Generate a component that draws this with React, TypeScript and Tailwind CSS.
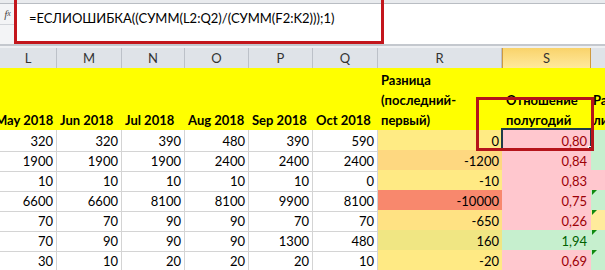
import React from "react";

type Row = {
  nums: number[];
  diff: string;
  diffBg: string;
  ratio: string;
  good: boolean;
  tBg: string;
  flag: boolean;
};

const ROWS: Row[] = [
  { nums: [320, 320, 390, 480, 390, 590], diff: "0", diffBg: "bg-[#ffeb84]", ratio: "0,80", good: false, tBg: "bg-[#c6efce]", flag: false },
  { nums: [1900, 1900, 1900, 2400, 2400, 2400], diff: "-1200", diffBg: "bg-[#fed880]", ratio: "0,84", good: false, tBg: "bg-[#c6efce]", flag: false },
  { nums: [10, 10, 10, 10, 10, 0], diff: "-10", diffBg: "bg-[#ffea84]", ratio: "0,83", good: false, tBg: "bg-[#ffc7ce]", flag: false },
  { nums: [6600, 6600, 8100, 8100, 9900, 8100], diff: "-10000", diffBg: "bg-[#f8886d]", ratio: "0,75", good: false, tBg: "bg-[#c6efce]", flag: true },
  { nums: [70, 70, 90, 90, 70, 70], diff: "-650", diffBg: "bg-[#ffe283]", ratio: "0,26", good: false, tBg: "bg-[#ffeb9c]", flag: true },
  { nums: [70, 90, 90, 90, 1300, 480], diff: "160", diffBg: "bg-[#f0e683]", ratio: "1,94", good: true, tBg: "bg-[#c6efce]", flag: true },
  { nums: [30, 10, 20, 20, 20, 10], diff: "-20", diffBg: "bg-[#ffea84]", ratio: "0,69", good: false, tBg: "bg-[#c6efce]", flag: true },
];

const LETTERS = ["L", "M", "N", "O", "P", "Q", "R"];
const MONTHS = ["May 2018", "Jun 2018", "Jul 2018", "Aug 2018", "Sep 2018", "Oct 2018"];

export default function App() {
  return (
    <div className="relative h-[270px] w-[605px] overflow-hidden bg-white font-['Lato',sans-serif] text-[13px] text-black">
      {/* formula bar */}
      <div className="h-[3px] bg-[#e9ebee]" />
      <div className="flex h-[41px] border-t border-[#b9bdc3]">
        <div className="flex w-[15px] flex-col bg-[#f3f4f6]">
          <div className="flex h-[21px] items-center justify-center border-b border-[#d2d5da] font-['Liberation_Serif',serif] text-[11px] italic text-[#4a4a4a]">
            f<span className="text-[8px]">x</span>
          </div>
        </div>
        <div className="flex-1 pl-[14px] pt-[4px] leading-[20px]">
          =ЕСЛИОШИБКА((СУММ(L2:Q2)/(СУММ(F2:K2)));1)
        </div>
      </div>
      <div className="h-[4px] border-t-2 border-[#c4c8ce] bg-[#eef0f3]" />

      {/* column letters */}
      <div className="grid h-[20px] grid-cols-[57px_65px_63px_64px_64px_65px_124px_89px_14px] bg-[#dfe3e8] leading-[20px] text-[#333]">
        {LETTERS.map((l) => (
          <div key={l} className="border-r border-[#bcc1c8] text-center">
            {l}
          </div>
        ))}
        <div className="border-x border-[#cf9a40] bg-gradient-to-b from-[#f9d36a] to-[#ffe99c] text-center">S</div>
        <div />
      </div>

      {/* yellow header row */}
      <div className="grid h-[62px] grid-cols-[57px_65px_63px_64px_64px_65px_124px_89px_14px] bg-[#ffff00] font-bold leading-[20px]">
        {MONTHS.map((m, i) => (
          <div key={m} className={`flex items-end whitespace-nowrap ${i === 0 ? "-ml-[5px]" : "pl-[3px]"}`}>
            {m}
          </div>
        ))}
        <div className="flex flex-col justify-end pl-[3px]">
          <span>Разница</span>
          <span>(последний-</span>
          <span>первый)</span>
        </div>
        <div className="flex flex-col justify-end pl-[4px]">
          <span>Отношение</span>
          <span>полугодий</span>
        </div>
        <div className="flex flex-col justify-end overflow-hidden whitespace-nowrap pl-[2px]">
          <span>Ра</span>
          <span>ли</span>
        </div>
      </div>

      {/* data rows */}
      {ROWS.map((r, ri) => (
        <div
          key={ri}
          className="grid h-[20px] grid-cols-[57px_65px_63px_64px_64px_65px_124px_89px_14px] leading-[20px]"
        >
          {r.nums.map((n, ci) => (
            <div key={ci} className="border-b border-r border-[#d4d4d4] pr-[3px] pt-[1px] text-right">
              {n}
            </div>
          ))}
          <div className={`pr-[3px] pt-[1px] text-right ${r.diffBg}`}>{r.diff}</div>
          <div
            className={`pr-[4px] pt-[1px] text-right ${
              r.good ? "bg-[#c6efce] text-[#006100]" : "bg-[#ffc7ce] text-[#9c0006]"
            }`}
          >
            {r.ratio}
          </div>
          <div className={`relative ${r.tBg}`}>
            {r.flag ? (
              <div className="absolute left-[1px] top-0 h-0 w-0 border-r-[5px] border-t-[5px] border-r-transparent border-t-[#118a11]" />
            ) : null}
          </div>
        </div>
      ))}

      {/* selection on S2 */}
      <div className="absolute left-[501px] top-[128px] h-[22px] w-[91px] border-2 border-[#1f3b4a]" />
      <div className="absolute left-[588px] top-[146px] h-[5px] w-[5px] border border-white bg-[#1f3b4a]" />

      {/* red highlight boxes */}
      <div className="absolute left-[14px] top-[-3px] h-[47px] w-[370px] border-[3px] border-[#c3161c]" />
      <div className="absolute left-[476px] top-[97px] h-[54px] w-[118px] border-[3px] border-[#b5141b]" />
    </div>
  );
}
